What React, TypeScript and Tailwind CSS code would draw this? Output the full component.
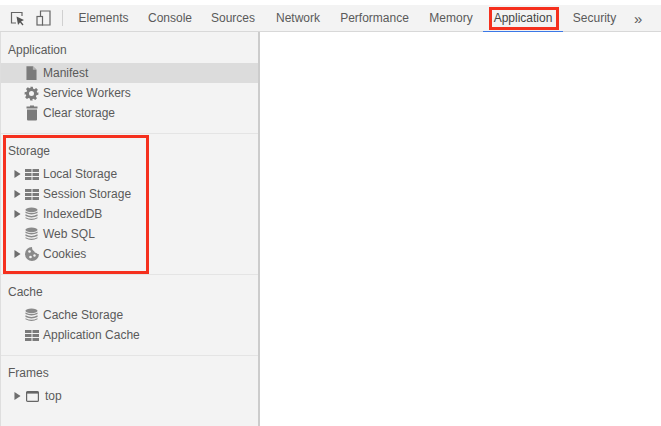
import React from "react";

const font = "font-['Liberation_Sans',Arial,sans-serif]";

const Arrow = () => (
  <svg viewBox="0 0 8 10" className="h-[10px] w-[7px] text-[#6e6e6e]">
    <path d="M0.5 0.5 L7.5 5 L0.5 9.5 Z" fill="currentColor" />
  </svg>
);

const FileIcon = () => (
  <svg viewBox="0 0 12 16" className="h-[16px] w-[11px]">
    <path d="M0.5 0.5 H7.5 L11.5 4.5 V15.5 H0.5 Z" fill="#7b7b7b" />
    <path d="M7.5 0.5 L11.5 4.5 H7.5 Z" fill="#b4b4b4" />
  </svg>
);

const GearIcon = () => (
  <svg viewBox="0 0 24 24" className="h-[15px] w-[15px]">
    <path
      fillRule="evenodd"
      fill="#7b7b7b"
      d="M10 1h4l.7 3.2 1.9.8 2.8-1.8 2.8 2.8-1.8 2.8.8 1.9L23 10v4l-3.2.7-.8 1.9 1.8 2.8-2.8 2.8-2.8-1.8-1.9.8L14 23h-4l-.7-3.2-1.9-.8-2.8 1.8-2.8-2.8 1.8-2.8-.8-1.9L1 14v-4l3.2-.7.8-1.9-1.8-2.8 2.8-2.8 2.8 1.8 1.9-.8zM12 8a4 4 0 1 0 0 8 4 4 0 0 0 0-8z"
    />
  </svg>
);

const TrashIcon = () => (
  <svg viewBox="0 0 12 16" className="h-[16px] w-[12px]">
    <path d="M4 0.5 H8 V1.5 H11.5 V3.5 H0.5 V1.5 H4 Z" fill="#7b7b7b" />
    <path d="M1 4.5 H11 V14.5 Q11 15.5 10 15.5 H2 Q1 15.5 1 14.5 Z" fill="#7b7b7b" />
  </svg>
);

const GridIcon = () => (
  <svg viewBox="0 0 14 11" className="h-[11px] w-[14px]" fill="#7b7b7b">
    <rect x="0" y="0" width="6.5" height="3" />
    <rect x="7.5" y="0" width="6.5" height="3" />
    <rect x="0" y="4" width="6.5" height="3" />
    <rect x="7.5" y="4" width="6.5" height="3" />
    <rect x="0" y="8" width="6.5" height="3" />
    <rect x="7.5" y="8" width="6.5" height="3" />
  </svg>
);

const DbIcon = () => (
  <svg viewBox="0 0 14 14" className="h-[14px] w-[13px]" fill="#8a8a8a">
    <ellipse cx="7" cy="2.5" rx="6.5" ry="2.5" />
    <path d="M0.5 4.2 Q7 7.6 13.5 4.2 V6 Q7 9.2 0.5 6 Z" />
    <path d="M0.5 7.4 Q7 10.8 13.5 7.4 V9.2 Q7 12.4 0.5 9.2 Z" />
    <path d="M0.5 10.4 Q7 13.8 13.5 10.4 V11.5 Q7 15.4 0.5 11.5 Z" />
  </svg>
);

const CookieIcon = () => (
  <svg viewBox="0 0 14 14" className="h-[14px] w-[14px]">
    <path d="M7 0 A7 7 0 1 0 14 7 Q12.5 7.5 11.5 6 Q9.5 6 9 4 Q7 3.5 7 0 Z" fill="#8a8a8a" />
    <circle cx="4.5" cy="4.5" r="1.3" fill="#f3f3f3" />
    <circle cx="9.5" cy="8.5" r="1.2" fill="#f3f3f3" />
    <circle cx="5.5" cy="10" r="1.3" fill="#f3f3f3" />
  </svg>
);

const FrameIcon = () => (
  <svg viewBox="0 0 13 11" className="h-[11px] w-[13px]" fill="none">
    <rect x="0.6" y="0.6" width="11.8" height="9.8" rx="1" stroke="#666" strokeWidth="1.2" />
    <rect x="0.6" y="0.6" width="11.8" height="2" fill="#666" />
  </svg>
);

type Item = { label: string; icon: React.ReactNode; arrow?: boolean; selected?: boolean; frame?: boolean };

const Row = ({ label, icon, arrow, selected, frame }: Item) => (
  <div className={`flex h-[20px] items-center ${selected ? "bg-[#dcdcdc]" : ""}`}>
    <div className="flex w-[23px] justify-end pr-[3px]">{arrow && <Arrow />}</div>
    <div className={frame ? "flex w-[15px] justify-end" : "flex w-[15px] justify-center"}>{icon}</div>
    <span className={`whitespace-nowrap ${frame ? "ml-[6px]" : "ml-[4px]"}`}>{label}</span>
  </div>
);

const Section = ({ title, items, divider = true }: { title: string; items: Item[]; divider?: boolean }) => (
  <div className={`pb-[10px] ${divider ? "border-b border-[#e4e4e4]" : ""}`}>
    <div className="flex h-[30px] items-center pl-[7px] pt-[4px]">{title}</div>
    {items.map((item) => (
      <Row key={item.label} {...item} />
    ))}
  </div>
);

const tabs = [
  { name: "Elements", w: "w-[73px]" },
  { name: "Console", w: "w-[60px]" },
  { name: "Sources", w: "w-[66px]" },
  { name: "Network", w: "w-[64px]" },
  { name: "Performance", w: "w-[89px]" },
  { name: "Memory", w: "w-[64px]" },
  { name: "Application", w: "w-[80px]", active: true },
  { name: "Security", w: "w-[63px]" },
];

export default function App() {
  return (
    <div className={`${font} relative h-[426px] w-[661px] overflow-hidden bg-white pt-[5px] text-[12px] text-[#5a5a5a]`}>
      {/* Toolbar */}
      <div className="relative z-10 flex h-[27px] items-stretch border-b border-[#d8d8d8] bg-[#f3f3f3]">
        <div className="flex w-[67px] items-center pl-[10px]">
          <svg viewBox="0 0 15 15" className="h-[15px] w-[15px]" fill="none">
            <path d="M6 12 H1.5 V1.5 H12 V5" stroke="#666" strokeWidth="1.2" />
            <path d="M6.5 5.5 L14 9 L11 10.5 L13.5 13.5 L12.5 14.5 L10 11.5 L8 14 Z" fill="#555" />
          </svg>
          <svg viewBox="0 0 15 16" className="ml-[11px] h-[16px] w-[15px]" fill="none">
            <path d="M4.5 6 V1 H14 V15 H6" stroke="#666" strokeWidth="1.2" />
            <rect x="1" y="6.5" width="5.5" height="8.5" stroke="#666" strokeWidth="1.2" />
          </svg>
          <div className="ml-[11px] h-[16px] w-px bg-[#d0d0d0]" />
        </div>
        <div className="flex items-stretch">
          {tabs.map((tab) => (
            <div
              key={tab.name}
              className={`flex items-center justify-center whitespace-nowrap ${tab.w} ${tab.active ? "-mb-px border-b border-[#3b78e7] text-[#444]" : ""}`}
            >
              {tab.name}
            </div>
          ))}
          <div className="ml-[8px] flex items-center text-[15px] leading-none">»</div>
        </div>
      </div>

      {/* Main */}
      <div className="flex h-[394px]">
        <div className="w-[260px] shrink-0 border-l border-r-2 border-l-[#dedede] border-r-[#cccccc] bg-[#f3f3f3] pt-px">
          <Section
            title="Application"
            items={[
              { label: "Manifest", icon: <FileIcon />, selected: true },
              { label: "Service Workers", icon: <GearIcon /> },
              { label: "Clear storage", icon: <TrashIcon /> },
            ]}
          />
          <Section
            title="Storage"
            items={[
              { label: "Local Storage", icon: <GridIcon />, arrow: true },
              { label: "Session Storage", icon: <GridIcon />, arrow: true },
              { label: "IndexedDB", icon: <DbIcon />, arrow: true },
              { label: "Web SQL", icon: <DbIcon /> },
              { label: "Cookies", icon: <CookieIcon />, arrow: true },
            ]}
          />
          <Section
            title="Cache"
            items={[
              { label: "Cache Storage", icon: <DbIcon /> },
              { label: "Application Cache", icon: <GridIcon /> },
            ]}
          />
          <Section title="Frames" divider={false} items={[{ label: "top", icon: <FrameIcon />, arrow: true, frame: true }]} />
        </div>
        <div className="flex-1 bg-white" />
      </div>

      {/* Red annotation boxes drawn over the screenshot */}
      <div className="absolute left-[489px] top-[7px] z-20 h-[23px] w-[70px] border-[3px] border-[#f5301e]" />
      <div className="absolute left-[3px] top-[135px] z-20 h-[139px] w-[146px] border-[3px] border-[#f5301e]" />
    </div>
  );
}
